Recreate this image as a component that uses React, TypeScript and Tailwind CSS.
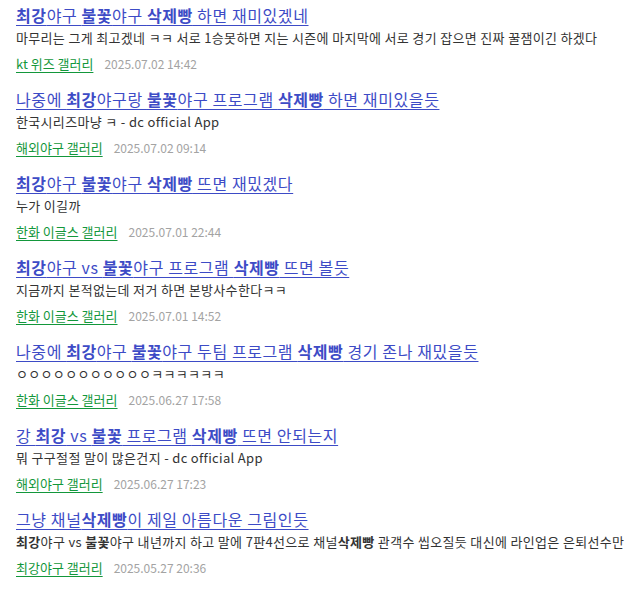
import React from "react";

type Item = { title: string; body: string; gall: string; date: string };

const items: Item[] = [
  {
    title: "최강야구 불꽃야구 삭제빵 하면 재미있겠네",
    body: "마무리는 그게 최고겠네 ㅋㅋ 서로 1승못하면 지는 시즌에 마지막에 서로 경기 잡으면 진짜 꿀잼이긴 하겠다",
    gall: "kt 위즈 갤러리",
    date: "2025.07.02 14:42",
  },
  {
    title: "나중에 최강야구랑 불꽃야구 프로그램 삭제빵 하면 재미있을듯",
    body: "한국시리즈마냥 ㅋ - dc official App",
    gall: "해외야구 갤러리",
    date: "2025.07.02 09:14",
  },
  {
    title: "최강야구 불꽃야구 삭제빵 뜨면 재밌겠다",
    body: "누가 이길까",
    gall: "한화 이글스 갤러리",
    date: "2025.07.01 22:44",
  },
  {
    title: "최강야구 vs 불꽃야구 프로그램 삭제빵 뜨면 볼듯",
    body: "지금까지 본적없는데 저거 하면 본방사수한다ㅋㅋ",
    gall: "한화 이글스 갤러리",
    date: "2025.07.01 14:52",
  },
  {
    title: "나중에 최강야구 불꽃야구 두팀 프로그램 삭제빵 경기 존나 재밌을듯",
    body: "ㅇㅇㅇㅇㅇㅇㅇㅇㅇㅇㅇㅋㅋㅋㅋㅋㅋ",
    gall: "한화 이글스 갤러리",
    date: "2025.06.27 17:58",
  },
  {
    title: "강 최강 vs 불꽃 프로그램 삭제빵 뜨면 안되는지",
    body: "뭐 구구절절 말이 많은건지 - dc official App",
    gall: "해외야구 갤러리",
    date: "2025.06.27 17:23",
  },
  {
    title: "그냥 채널삭제빵이 제일 아름다운 그림인듯",
    body: "최강야구 vs 불꽃야구 내년까지 하고 말에 7판4선으로 채널삭제빵 관객수 씹오질듯 대신에 라인업은 은퇴선수만",
    gall: "최강야구 갤러리",
    date: "2025.05.27 20:36",
  },
];

function Highlight({ text }: { text: string }) {
  const parts = text.split(/(최강|불꽃|삭제빵)/);
  return (
    <>
      {parts.map((p, i) =>
        p === "최강" || p === "불꽃" || p === "삭제빵" ? (
          <b key={i} className="font-bold">
            {p}
          </b>
        ) : (
          <React.Fragment key={i}>{p}</React.Fragment>
        )
      )}
    </>
  );
}

export default function App() {
  return (
    <div
      className="w-[640px] h-[590px] bg-white overflow-hidden"
      style={{ fontFamily: '"Noto Sans CJK KR", "Noto Sans", sans-serif' }}
    >
      <ul className="pl-4 pr-2">
        {items.map((it, i) => (
          <li key={i} className="h-[84px] pt-[5px]">
            <a className="block text-[16px] leading-[20px] tracking-[0.6px] text-[#3d4bc6] underline underline-offset-[3px] decoration-1 whitespace-nowrap">
              <Highlight text={it.title} />
            </a>
            <p className="mt-[4px] text-[13px] leading-[18px] tracking-[0.33px] text-[#333333] whitespace-nowrap">
              <Highlight text={it.body} />
            </p>
            <div className="mt-[8px] flex items-center gap-[11px] leading-[18px] whitespace-nowrap">
              <a className="text-[13px] text-[#13973b] underline underline-offset-[3px] decoration-1">{it.gall}</a>
              <span className="text-[12px] text-[#a3a3a3]">{it.date}</span>
            </div>
          </li>
        ))}
      </ul>
    </div>
  );
}
